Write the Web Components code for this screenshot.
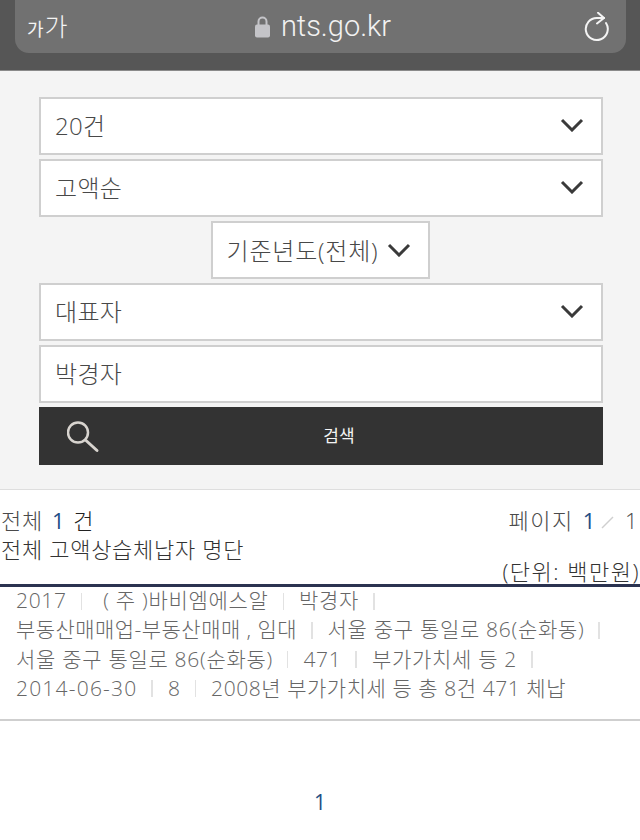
<!DOCTYPE html>
<html lang="ko">
<head>
<meta charset="utf-8">
<title>nts.go.kr</title>
<style>
  html, body { margin: 0; padding: 0; background: #fff; }
  body { font-family: "Open Sans", "Noto Sans CJK KR", sans-serif; font-weight: 300; color: #444; width: 640px; height: 840px; overflow: hidden; }
  .corp { margin-left: 6px; }
  .tight { letter-spacing: .45px; }
  .date { letter-spacing: 1.200px; }
  .note { letter-spacing: .55px; }
</style>
</head>
<body>
<url-bar domain="nts.go.kr"></url-bar>
<search-panel>
  <form-box chevron>20건</form-box>
  <form-box chevron>고액순</form-box>
  <form-box chevron narrow>기준년도(전체)</form-box>
  <form-box chevron>대표자</form-box>
  <form-box>박경자</form-box>
  <search-button>검색</search-button>
</search-panel>
<result-summary></result-summary>
<result-card>
  <card-line><card-item>2017</card-item><card-item><span class="corp">( 주 )바비엠에스알</span></card-item><card-item>박경자</card-item></card-line>
  <card-line><card-item><span class="tight">부동산매매업-부동산매매 , 임대</span></card-item><card-item>서울 중구 통일로 86(순화동)</card-item></card-line>
  <card-line><card-item>서울 중구 통일로 86(순화동)</card-item><card-item>471</card-item><card-item>부가가치세 등 2</card-item></card-line>
  <card-line><card-item><span class="date">2014-06-30</span></card-item><card-item>8</card-item><card-item last><span class="note">2008년 부가가치세 등 총 8건 471 체납</span></card-item></card-line>
</result-card>
<page-nav current="1"></page-nav>

<script>
class UrlBar extends HTMLElement {
  constructor() {
    super();
    const root = this.attachShadow({ mode: "open" });
    root.innerHTML = `
      <style>
        :host { display: block; height: 71px; box-sizing: border-box; background: #565656; padding: 0 14px 17px 15px; border-bottom: 1px solid #8a8a8a; }
        .pill { height: 100%; background: #717171; border-radius: 0 0 14px 14px; display: flex; align-items: center; padding: 0 16px 0 12px; color: #f4f4f4; }
        .size { font-size: 25px; width: 40px; white-space: nowrap; font-weight: 300; line-height: 1; }
        .size small { font-size: 18px; font-weight: 400; margin-right: 1px; }
        .addr { flex: 1; display: flex; justify-content: center; align-items: center; gap: 11px; margin-right: 5px; }
        .domain { font: 300 29px/1 "Roboto", "Liberation Sans", sans-serif; color: #f2f2f2; }
        svg { display: block; }
        .reload { margin-top: 1px; }
      </style>
      <div class="pill">
        <span class="size"><small>가</small>가</span>
        <span class="addr">
          <svg width="15" height="22" viewBox="0 0 15 22"><path d="M3.5 9V5.500a4 4 0 0 1 8 0V9" fill="none" stroke="#c4c4c8" stroke-width="2"/><rect x="0" y="8.500" width="15" height="13" rx="2" fill="#c4c4c8"/></svg>
          <span class="domain"></span>
        </span>
        <svg class="reload" width="26" height="30" viewBox="0 0 26 30"><path d="M20 6H13A11 11 0 1 0 22 11" fill="none" stroke="#f4f4f4" stroke-width="2" stroke-linecap="round"/><path d="M14 .8l6 5.200-7 5.500" fill="none" stroke="#f4f4f4" stroke-width="2" stroke-linecap="round" stroke-linejoin="round"/></svg>
      </div>`;
    root.querySelector(".domain").textContent = this.getAttribute("domain");
  }
}

class SearchPanel extends HTMLElement {
  constructor() {
    super();
    this.attachShadow({ mode: "open" }).innerHTML = `
      <style>
        :host { display: flex; flex-direction: column; gap: 4px; height: 419px; box-sizing: border-box; padding: 26px 37px 0 39px; background: #f4f4f4; border-bottom: 1px solid #dedede; }
      </style>
      <slot></slot>`;
  }
}

class FormBox extends HTMLElement {
  constructor() {
    super();
    const root = this.attachShadow({ mode: "open" });
    root.innerHTML = `
      <style>
        :host { display: flex; align-items: center; justify-content: space-between; height: 58px; box-sizing: border-box; padding: 0 17px 4px 14px; background: #fff; border: 2px solid #cfcfcf; font-size: 24px; letter-spacing: .3px; color: #484848; }
        :host([narrow]) { align-self: center; width: 219px; margin-right: 2px; padding: 0 17px 2px 14px; letter-spacing: .8px; white-space: nowrap; }
        svg { display: block; flex: none; margin-top: 2px; }
      </style>
      <slot></slot>
      <svg width="24" height="14" viewBox="0 0 24 14"><path d="M2 2l10 10L22 2" fill="none" stroke="#3a3a3a" stroke-width="3"/></svg>`;
    if (!this.hasAttribute("chevron")) root.querySelector("svg").remove();
  }
}

class SearchButton extends HTMLElement {
  constructor() {
    super();
    this.attachShadow({ mode: "open" }).innerHTML = `
      <style>
        :host { display: block; position: relative; height: 58px; background: #333; color: #f4f4f4; font-size: 17px; font-weight: 400; }
        .label { display: flex; height: 100%; align-items: center; justify-content: center; padding: 0 0 3px 36px; box-sizing: border-box; }
        svg { position: absolute; left: 28px; top: 12px; }
      </style>
      <svg width="34" height="36" viewBox="0 0 34 36"><circle cx="11" cy="13.500" r="10" fill="none" stroke="#d8d4cf" stroke-width="2.500"/><path d="M19 21.500l11 10" stroke="#d8d4cf" stroke-width="3" stroke-linecap="round"/></svg>
      <div class="label"><slot></slot></div>`;
  }
}

class ResultSummary extends HTMLElement {
  constructor() {
    super();
    this.attachShadow({ mode: "open" }).innerHTML = `
      <style>
        :host { display: block; height: 97px; box-sizing: border-box; padding-top: 16px; border-bottom: 3px solid #2b3350; font-size: 22px; letter-spacing: .7px; color: #4a4a4a; }
        .row { display: flex; justify-content: space-between; padding: 0 1px; line-height: 29px; height: 29px; white-space: nowrap; }
        .count, .pager { display: flex; align-items: center; }
        .num { color: #1f4e85; font-weight: 400; }
        .count .num { margin: 0 8px 0 9px; }
        .pager { letter-spacing: 1.500px; }
        .pager .num { margin-left: 9px; }
        .pager svg { margin: 2px 11px 0 4px; }
        .unit { display: flex; justify-content: flex-end; line-height: 24px; margin-top: -5px; letter-spacing: 1.500px; color: #333; }
        .dark { color: #222; }
        .title { color: #333; }
      </style>
      <div class="row">
        <span class="count">전체<span class="num">1</span><span class="dark">건</span></span>
        <span class="pager">페이지<span class="num">1</span><svg width="13" height="14" viewBox="0 0 13 14"><path d="M1 13L12 2" stroke="#cfcfcf" stroke-width="1.500"/></svg>1</span>
      </div>
      <div class="row"><span class="title">전체 고액상습체납자 명단</span></div>
      <div class="unit">(단위: 백만원)</div>`;
  }
}

class ResultCard extends HTMLElement {
  constructor() {
    super();
    this.attachShadow({ mode: "open" }).innerHTML = `
      <style>
        :host { display: block; height: 134px; box-sizing: border-box; padding: 0 16px; border-bottom: 2px solid #cfcfcf; }
      </style>
      <slot></slot>`;
  }
}

class CardLine extends HTMLElement {
  constructor() {
    super();
    this.attachShadow({ mode: "open" }).innerHTML = `
      <style>
        :host { display: flex; align-items: flex-start; height: 29.300px; line-height: 26px; white-space: nowrap; font-size: 21px; letter-spacing: .7px; color: #666; }
      </style>
      <slot></slot>`;
  }
}

class CardItem extends HTMLElement {
  constructor() {
    super();
    const root = this.attachShadow({ mode: "open" });
    root.innerHTML = `
      <style>
        :host { display: inline-flex; align-items: center; }
        .sep { width: 1.500px; height: 17px; margin: 2px 15px 0 14px; background: #e2e2e2; }
      </style>
      <slot></slot><span class="sep"></span>`;
    if (this.hasAttribute("last")) root.querySelector(".sep").remove();
  }
}

class PageNav extends HTMLElement {
  constructor() {
    super();
    const root = this.attachShadow({ mode: "open" });
    root.innerHTML = `
      <style>
        :host { display: flex; justify-content: center; padding-top: 66px; font-size: 21px; line-height: 30px; color: #1f4e85; font-weight: 400; }
      </style>
      <span></span>`;
    root.querySelector("span").textContent = this.getAttribute("current");
  }
}

customElements.define("url-bar", UrlBar);
customElements.define("search-panel", SearchPanel);
customElements.define("form-box", FormBox);
customElements.define("search-button", SearchButton);
customElements.define("result-summary", ResultSummary);
customElements.define("result-card", ResultCard);
customElements.define("card-line", CardLine);
customElements.define("card-item", CardItem);
customElements.define("page-nav", PageNav);
</script>
</body>
</html>
